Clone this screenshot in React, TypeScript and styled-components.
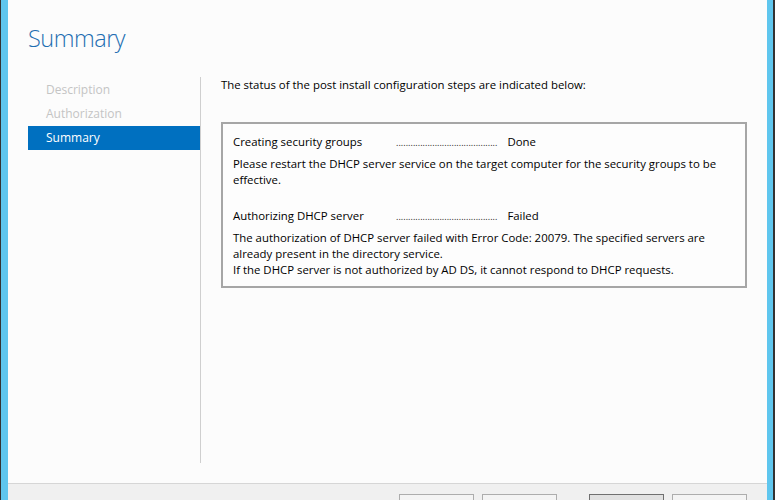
import React from 'react';
import styled, { createGlobalStyle } from 'styled-components';

const GlobalStyle = createGlobalStyle`
  html, body {
    margin: 0;
    padding: 0;
    width: 775px;
    height: 500px;
    overflow: hidden;
    background: #2f2f2f;
  }
  * {
    box-sizing: border-box;
  }
`;

const Frame = styled.div`
  display: flex;
  width: 775px;
  height: 500px;
  background: #333;
  padding-left: 1px;
  padding-right: 2px;
  font-family: "Open Sans", "Noto Sans", sans-serif;
  font-size: 11.4px;
  color: #000;
`;

const FrameEdge = styled.div<{ $w: number }>`
  width: ${(p) => p.$w}px;
  flex: none;
  background: #5fc6ee;
`;

const Window = styled.div`
  flex: 1;
  display: flex;
  flex-direction: column;
  background: #fcfcfc;
  min-width: 0;
`;

const Header = styled.div`
  height: 77px;
  padding: 21px 0 0 20px;
  flex: none;
`;

const Title = styled.h1`
  margin: 0;
  font-weight: 300;
  font-size: 23.5px;
  letter-spacing: -0.5px;
  line-height: 34px;
  color: #1f6fb2;
`;

const Body = styled.div`
  flex: 1;
  display: flex;
  padding: 0 0 20px 20px;
  min-height: 0;
`;

const Nav = styled.nav`
  width: 173px;
  flex: none;
  display: flex;
  flex-direction: column;
  padding-top: 1px;
  border-right: 1px solid #cfcfcf;
`;

const NavItem = styled.div<{ $active?: boolean }>`
  height: 24px;
  line-height: 24px;
  padding-left: 18px;
  font-size: 12px;
  color: ${(p) => (p.$active ? '#fff' : '#c4c4c4')};
  background: ${(p) => (p.$active ? '#0070c0' : 'transparent')};
`;

const Main = styled.div`
  flex: 1;
  padding: 0 20px 0 20px;
`;

const Intro = styled.p`
  margin: 0;
  line-height: 16px;
`;

const StatusBox = styled.div`
  margin-top: 29px;
  border: 2px solid #a6a6a6;
  padding: 10px 10px 8px;
  background: #fdfdfd;
`;

const Step = styled.div<{ $first?: boolean }>`
  margin-top: ${(p) => (p.$first ? 0 : 20)}px;
`;

const StepRow = styled.div`
  display: flex;
  align-items: baseline;
  line-height: 16px;
`;

const StepLabel = styled.span`
  width: 163px;
  flex: none;
`;

const Leader = styled.span`
  flex: none;
  white-space: nowrap;
  font-size: 9px;
  letter-spacing: 0.05px;
  color: #222;
`;

const StepStatus = styled.span`
  padding-left: 10px;
`;

const Message = styled.div`
  margin-top: 5px;
  line-height: 16px;
`;

const Footer = styled.div`
  height: 17px;
  flex: none;
  background: #f0f0f0;
  border-top: 1px solid #d6d6d6;
  display: flex;
  justify-content: flex-end;
  align-items: flex-start;
  padding: 10px 20px 0 0;
`;

const Button = styled.button<{ $primary?: boolean; $gap?: number }>`
  width: 75px;
  height: 23px;
  flex: none;
  margin-left: ${(p) => p.$gap ?? 8}px;
  border: 1px solid ${(p) => (p.$primary ? '#707070' : '#adadad')};
  background: ${(p) => (p.$primary ? '#e1e1e1' : '#f4f4f4')};
  padding: 0;
`;

const dots = '.'.repeat(42);

const App: React.FC = () => {
  return (
    <>
      <GlobalStyle />
      <Frame>
        <FrameEdge $w={7} />
        <Window>
          <Header>
            <Title>Summary</Title>
          </Header>
          <Body>
            <Nav>
              <NavItem>Description</NavItem>
              <NavItem>Authorization</NavItem>
              <NavItem $active>Summary</NavItem>
            </Nav>
            <Main>
              <Intro>The status of the post install configuration steps are indicated below:</Intro>
              <StatusBox>
                <Step $first>
                  <StepRow>
                    <StepLabel>Creating security groups</StepLabel>
                    <Leader>{dots}</Leader>
                    <StepStatus>Done</StepStatus>
                  </StepRow>
                  <Message>
                    Please restart the DHCP server service on the target computer for the security groups to be
                    effective.
                  </Message>
                </Step>
                <Step>
                  <StepRow>
                    <StepLabel>Authorizing DHCP server</StepLabel>
                    <Leader>{dots}</Leader>
                    <StepStatus>Failed</StepStatus>
                  </StepRow>
                  <Message>
                    The authorization of DHCP server failed with Error Code: 20079. The specified servers are
                    already present in the directory service.
                    <br />
                    If the DHCP server is not authorized by AD DS, it cannot respond to DHCP requests.
                  </Message>
                </Step>
              </StatusBox>
            </Main>
          </Body>
          <Footer>
            <Button aria-label="Previous" />
            <Button aria-label="Next" />
            <Button aria-label="Close" $primary $gap={32} />
            <Button aria-label="Cancel" />
          </Footer>
        </Window>
        <FrameEdge $w={6} />
      </Frame>
    </>
  );
};

export default App;
